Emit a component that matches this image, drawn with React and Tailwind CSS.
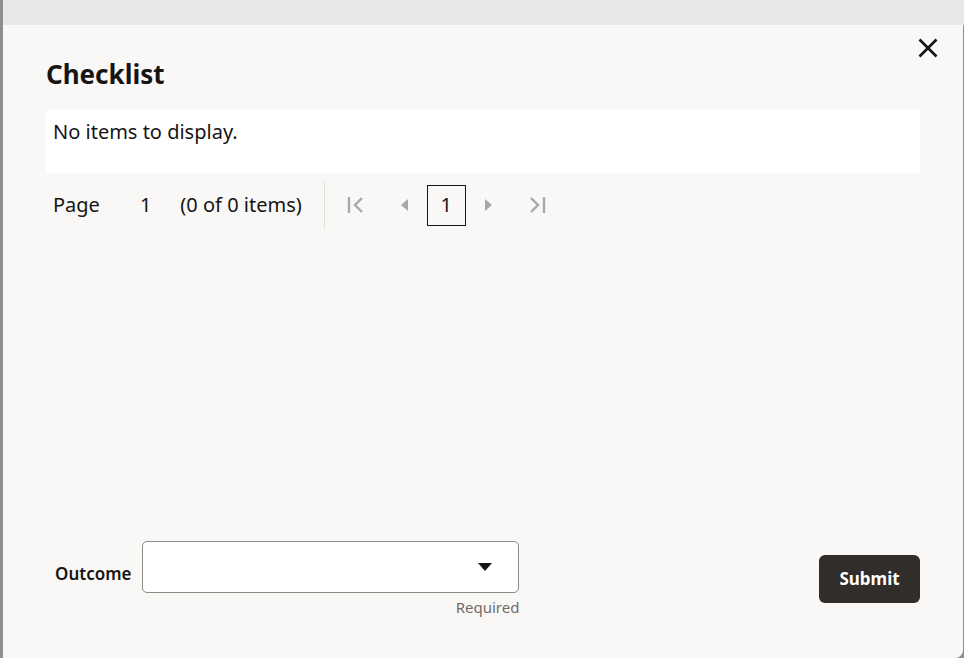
import React from 'react';

function FirstIcon() {
  return (
    <svg width="20" height="20" viewBox="0 0 20 20" fill="none" stroke="#a8a8a8" strokeWidth="2.4">
      <path d="M3 2v16" />
      <path d="M16 3l-7 7 7 7" />
    </svg>
  );
}

function LastIcon() {
  return (
    <svg width="20" height="20" viewBox="0 0 20 20" fill="none" stroke="#a8a8a8" strokeWidth="2.4">
      <path d="M17 2v16" />
      <path d="M4 3l7 7-7 7" />
    </svg>
  );
}

function App() {
  return (
    <div className="h-[658px] w-[964px] overflow-hidden bg-[#8e8e8e] pl-[3px] pt-[25px] font-['Noto_Sans',sans-serif]">
      <div className="relative flex h-[633px] w-[960px] flex-col rounded-br-lg bg-[#f9f8f6]">
        <div className="absolute -top-[25px] left-0 h-[25px] w-[961px] bg-[#e9e8e7]" />
        <button className="absolute right-[25px] top-[13px] text-[#161513]">
          <svg width="20" height="20" viewBox="0 0 20 20" stroke="currentColor" strokeWidth="2.6" fill="none">
            <path d="M1.5 1.5l17 17M18.5 1.5l-17 17" />
          </svg>
        </button>

        <h1 className="ml-[43px] mt-[32px] text-[26px] font-bold leading-[34px] text-[#161513]">Checklist</h1>

        <div className="ml-[43px] mt-[19px] h-[63px] w-[874px] bg-white px-[7px] pt-[8px] text-[20px] leading-[28px] text-[#161513]">
          No items to display.
        </div>

        <div className="ml-[43px] mt-[7px] flex h-[48px] items-center pt-[2px] text-[20px] text-[#161513]">
          <span className="ml-[7px]">Page</span>
          <span className="ml-[40px]">1</span>
          <span className="ml-[29px]">(0 of 0 items)</span>
          <div className="ml-[22px] h-[48px] w-px bg-[#e1dfdc]" />
          <div className="ml-[21px] flex items-center">
            <FirstIcon />
            <svg className="ml-[32px]" width="12" height="16" viewBox="0 0 12 16">
              <path d="M10 2L3 8l7 6z" fill="#a8a8a8" />
            </svg>
            <div className="ml-[17px] flex h-[41px] w-[39px] items-center justify-center border border-[#161513] text-[20px]">1</div>
            <svg className="ml-[17px]" width="12" height="16" viewBox="0 0 12 16">
              <path d="M2 2l7 6-7 6z" fill="#a8a8a8" />
            </svg>
            <div className="ml-[32px]"><LastIcon /></div>
          </div>
        </div>

        <div className="mt-auto mb-[40px] ml-[52px] mr-[43px] flex items-start">
          <span className="mt-[20px] text-[17px] font-semibold text-[#161513]">Outcome</span>
          <div className="ml-[11px] flex flex-col items-end">
            <div className="flex h-[52px] w-[377px] items-center justify-end rounded-[5px] border border-[#8d8b88] bg-white pr-[26px]">
              <svg width="14" height="8" viewBox="0 0 14 8">
                <path d="M0 0h14L7 8z" fill="#161513" />
              </svg>
            </div>
            <span className="mt-[3px] text-[15px] text-[#6f6c69]">Required</span>
          </div>
          <button className="ml-auto mt-[14px] h-[48px] w-[101px] rounded-[6px] bg-[#312d2a] text-[17px] font-bold text-white">
            Submit
          </button>
        </div>
      </div>
    </div>
  );
}

export default App;
